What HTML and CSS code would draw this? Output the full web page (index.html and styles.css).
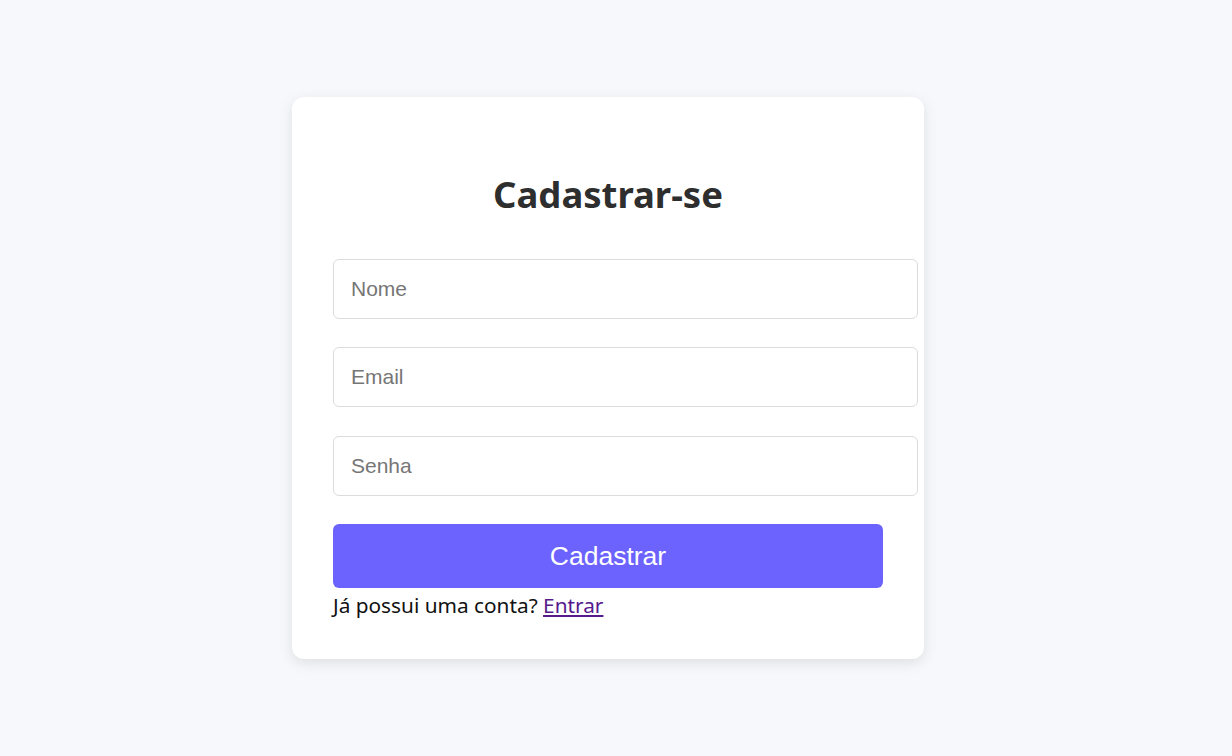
FILE: index.html
```html
<!DOCTYPE html>
<html lang="pt-BR">
<head>
<meta charset="utf-8">
<title>Cadastrar-se</title>
<link rel="stylesheet" href="styles.css">
</head>
<body>
  <div class="card">
    <h2 class="title">Cadastrar-se</h2>
    <form class="form">
      <input class="field" type="text" placeholder="Nome">
      <input class="field" type="email" placeholder="Email">
      <input class="field" type="password" placeholder="Senha">
      <button class="submit" type="button">Cadastrar</button>
    </form>
    <p class="footer">Já possui uma conta? <a class="link" href="#">Entrar</a></p>
  </div>
</body>
</html>
```

FILE: styles.css
```css
html, body {
  margin: 0;
  padding: 0;
}
body {
  background: #f7f8fc;
  min-height: 100vh;
  box-sizing: border-box;
  padding-right: 16px;
  display: flex;
  align-items: center;
  justify-content: center;
  font-family: "Noto Sans", "Open Sans", sans-serif;
}
.card {
  width: 550px;
  padding: 40px 41px 41px 41px;
  background: #ffffff;
  border-radius: 12px;
  box-shadow: 0 4px 14px rgba(0, 0, 0, 0.1);
}
.title {
  margin: 33px 0 41px 0;
  text-align: center;
  font-size: 36.5px;
  font-weight: 700;
  color: #2e2e2e;
  line-height: 48px;
}
.form {
  display: flex;
  flex-direction: column;
  gap: 28.5px;
  margin: 0;
}
.field {
  width: 585px;
  height: 60px;
  box-sizing: border-box;
  padding: 0 17px;
  border: 1px solid #dcdcdc;
  border-radius: 6px;
  font-family: "Liberation Sans", Arial, sans-serif;
  font-size: 21px;
  color: #333;
  background: #fff;
  outline: none;
}
.field::placeholder {
  color: #767676;
}
.submit {
  width: 550px;
  height: 64px;
  border: none;
  border-radius: 6px;
  background: #6c63ff;
  color: #ffffff;
  font-family: "Liberation Sans", Arial, sans-serif;
  font-size: 26.5px;
  cursor: pointer;
}
.footer {
  margin: 4px 0 0 0;
  font-size: 20.8px;
  line-height: 26px;
  color: #111;
}
.link {
  color: #551a8b;
}
```
